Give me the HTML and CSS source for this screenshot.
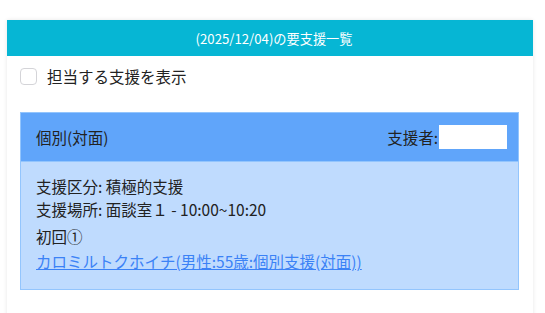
FILE: index.html
```html
<!DOCTYPE html>
<html lang="ja">
<head>
<meta charset="utf-8">
<link rel="stylesheet" href="styles.css">
</head>
<body>
<div class="panel">
  <div class="panel-title">(2025/12/04)の要支援一覧</div>
  <label class="filter">
    <span class="check"></span>
    <span>担当する支援を表示</span>
  </label>
  <div class="card">
    <div class="card-head">
      <span>個別(対面)</span>
      <span class="staff">支援者:<span class="staff-box"></span></span>
    </div>
    <div class="card-body">
      <div class="info">
        <div>支援区分: 積極的支援</div>
        <div>支援場所: 面談室１ - 10:00~10:20</div>
      </div>
      <div class="count">初回①</div>
      <a class="person" href="#">カロミルトクホイチ(男性:55歳:個別支援(対面))</a>
    </div>
  </div>
</div>
</body>
</html>
```
FILE: styles.css
```css
html, body {
  margin: 0;
  padding: 0;
  background: #fff;
}
body {
  font-family: "Noto Sans CJK JP", "Noto Sans", sans-serif;
  color: #222;
  font-size: 15.5px;
  line-height: 23px;
}
.panel {
  margin: 20px 0 0 7px;
  width: 526px;
  height: 300px;
  background: #fff;
  box-shadow: 0 0 4px rgba(0, 0, 0, 0.1);
}
.panel-title {
  height: 36px;
  background: #06b6d4;
  color: #fff;
  font-size: 13.2px;
  display: flex;
  align-items: center;
  justify-content: center;
  padding-left: 8px;
}
.filter {
  display: flex;
  align-items: center;
  gap: 10px;
  padding: 9px 13px 0;
}
.check {
  width: 15px;
  height: 15px;
  border: 1px solid #d4d4d8;
  border-radius: 4px;
  background: #fff;
}
.card {
  margin: 24px 14px 0 13px;
  border: 1px solid #93c5fd;
  background: #bfdbfe;
}
.card-head {
  display: flex;
  justify-content: space-between;
  align-items: center;
  background: #60a5fa;
  padding: 12px 11px 12px 15px;
  border-bottom: 1px solid #93c5fd;
}
.staff {
  display: flex;
  align-items: center;
  gap: 1px;
}
.staff-box {
  width: 68px;
  height: 24px;
  background: #fff;
}
.card-body {
  padding: 13px 15px 16px;
}
.count {
  margin-top: 4px;
}
.person {
  display: block;
  margin-top: 2px;
  color: #3b82f6;
  text-decoration: underline;
}
```
